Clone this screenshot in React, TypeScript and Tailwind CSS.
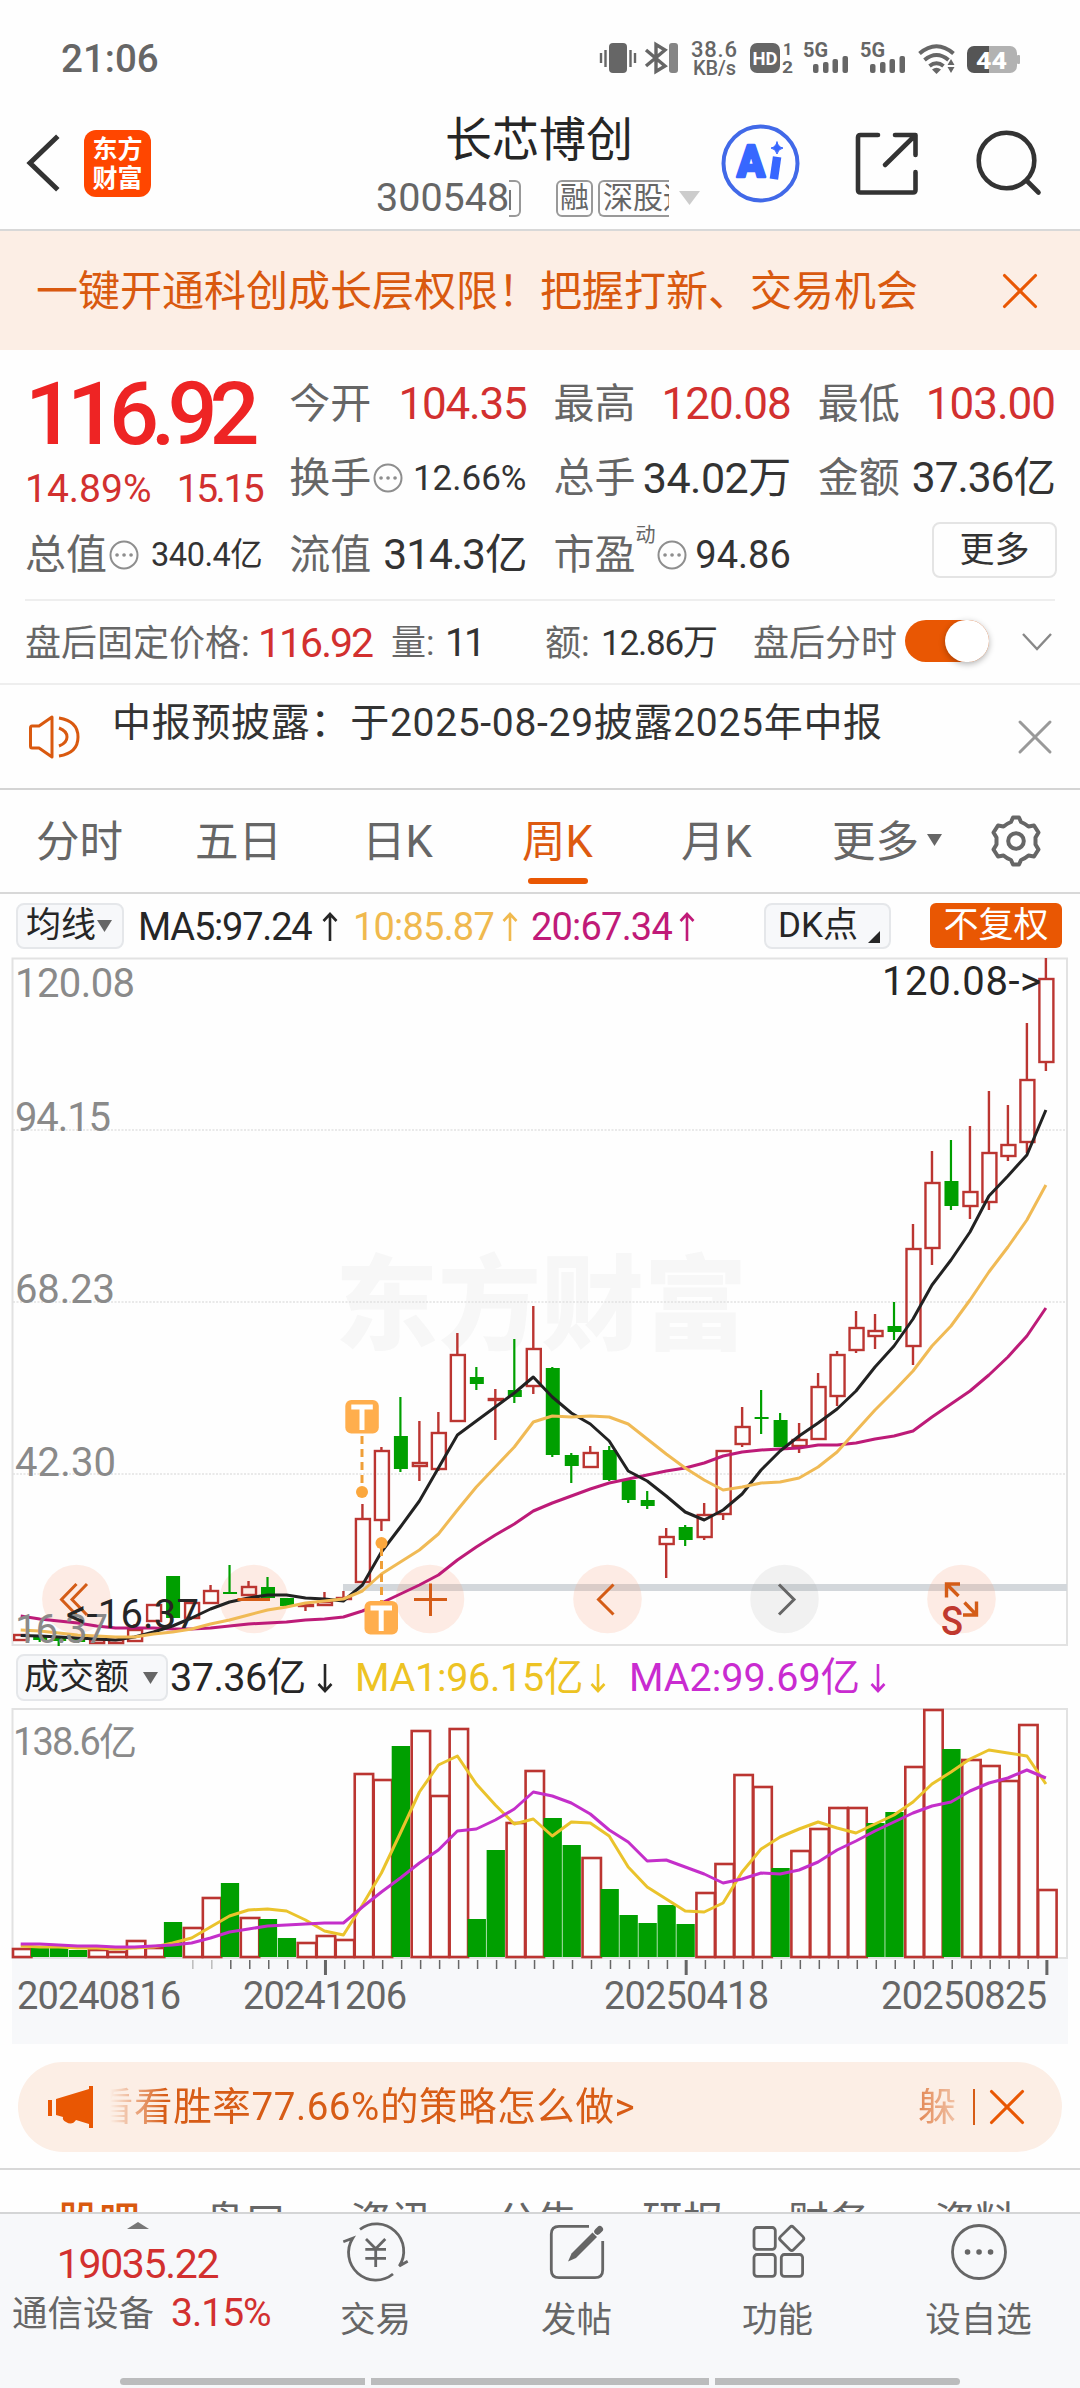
import { X } from "lucide-react";

// [rising, high, top, bottom, low]
const candles: [number, number, number, number, number][] = [
  [1, 1635, 1635, 1640, 1640], [0, 1637, 1637, 1640, 1642], [0, 1637, 1638, 1641, 1646], [0, 1637, 1638, 1642, 1643],
  [1, 1640, 1640, 1643, 1643], [1, 1640, 1640, 1643, 1643], [1, 1624, 1630, 1641, 1642], [1, 1604, 1605, 1621, 1621],
  [0, 1576, 1576, 1618, 1618], [1, 1599, 1603, 1618, 1618], [1, 1585, 1591, 1603, 1603], [0, 1565, 1592, 1593, 1594],
  [1, 1581, 1587, 1595, 1595], [0, 1577, 1587, 1598, 1598], [0, 1598, 1598, 1606, 1606], [1, 1604, 1605, 1606, 1611],
  [1, 1592, 1602, 1605, 1605], [1, 1591, 1598, 1599, 1600], [1, 1504, 1519, 1582, 1583], [1, 1447, 1451, 1520, 1531],
  [0, 1397, 1436, 1469, 1472], [1, 1421, 1463, 1466, 1481], [1, 1412, 1433, 1469, 1471], [1, 1333, 1355, 1421, 1422],
  [0, 1367, 1377, 1384, 1390], [1, 1389, 1399, 1400, 1440], [0, 1339, 1390, 1397, 1403], [1, 1306, 1349, 1386, 1394],
  [0, 1367, 1368, 1455, 1457], [0, 1453, 1455, 1466, 1483], [1, 1446, 1453, 1467, 1468], [0, 1446, 1450, 1480, 1481],
  [0, 1480, 1480, 1500, 1503], [0, 1491, 1500, 1506, 1509], [1, 1528, 1537, 1544, 1578], [0, 1525, 1527, 1540, 1546],
  [1, 1503, 1515, 1537, 1540], [1, 1450, 1451, 1514, 1520], [1, 1407, 1427, 1444, 1447], [0, 1390, 1417, 1418, 1434],
  [0, 1413, 1420, 1447, 1447], [1, 1423, 1440, 1446, 1453], [1, 1373, 1387, 1439, 1440], [1, 1351, 1355, 1396, 1406],
  [1, 1311, 1328, 1350, 1353], [1, 1314, 1331, 1336, 1349], [0, 1302, 1326, 1332, 1340], [1, 1224, 1249, 1346, 1365],
  [1, 1151, 1183, 1248, 1265], [0, 1140, 1181, 1206, 1210], [1, 1126, 1192, 1206, 1219], [1, 1091, 1153, 1202, 1210],
  [1, 1105, 1145, 1156, 1161], [1, 1023, 1080, 1142, 1153], [1, 958, 979, 1062, 1071],
];

const ma5 = [
  1635.5, 1636, 1637, 1638, 1639, 1640, 1637, 1632, 1626, 1618, 1609, 1602, 1598, 1595, 1595, 1598, 1599, 1601, 1585,
  1552, 1527, 1501, 1468, 1435, 1421, 1407, 1393, 1377, 1397, 1413, 1424, 1441, 1471, 1481, 1496, 1512, 1520, 1510,
  1494, 1470, 1451, 1436, 1423, 1409, 1391, 1367, 1346, 1319, 1285, 1260, 1232, 1196, 1176, 1155, 1110,
];
const ma10 = [
  1630, 1631, 1633, 1635, 1636, 1637, 1637, 1634, 1632, 1629, 1624, 1620, 1615, 1610, 1607, 1603, 1601, 1599, 1591,
  1574, 1562, 1550, 1534, 1510, 1487, 1467, 1447, 1422, 1416, 1417, 1416, 1417, 1424, 1439, 1454, 1468, 1480, 1490,
  1487, 1483, 1482, 1478, 1467, 1452, 1431, 1410, 1391, 1371, 1346, 1326, 1300, 1272, 1247, 1220, 1185,
];
const ma20 = [
  1616, 1619, 1621, 1623, 1626, 1628, 1628, 1628, 1629, 1629, 1628, 1626, 1624, 1623, 1622, 1620, 1619, 1617, 1611,
  1603, 1594, 1585, 1575, 1560, 1547, 1535, 1524, 1511, 1503, 1496, 1489, 1483, 1479, 1475, 1471, 1468, 1463, 1456,
  1452, 1450, 1449, 1448, 1445, 1445, 1443, 1439, 1436, 1431, 1417, 1404, 1391, 1375, 1357, 1336, 1308,
];

// [rising, top]
const volumes: [number, number][] = [
  [1, 1949], [0, 1947], [0, 1948], [0, 1950], [1, 1950], [1, 1952], [1, 1941], [1, 1948], [0, 1922], [1, 1928],
  [1, 1898], [0, 1883], [1, 1918], [0, 1919], [0, 1938], [1, 1943], [1, 1936], [1, 1940], [1, 1774], [1, 1780],
  [0, 1746], [1, 1731], [1, 1796], [1, 1729], [0, 1919], [0, 1850], [1, 1823], [1, 1771], [0, 1818], [0, 1845],
  [1, 1858], [0, 1889], [0, 1915], [0, 1923], [0, 1905], [0, 1924], [1, 1893], [1, 1864], [1, 1775], [1, 1787],
  [0, 1868], [1, 1851], [1, 1829], [1, 1808], [1, 1808], [0, 1823], [0, 1812], [1, 1767], [1, 1710], [0, 1749],
  [1, 1760], [1, 1766], [1, 1781], [1, 1725], [1, 1890],
];
const vma1 = [
  1946, 1947, 1947, 1948, 1948, 1949, 1948, 1947, 1943, 1938, 1927, 1916, 1910, 1909, 1911, 1920, 1931, 1935, 1905,
  1873, 1833, 1792, 1765, 1756, 1784, 1805, 1824, 1819, 1836, 1822, 1823, 1836, 1867, 1887, 1899, 1911, 1912, 1903,
  1872, 1849, 1837, 1829, 1822, 1828, 1833, 1824, 1815, 1802, 1784, 1772, 1759, 1750, 1753, 1756, 1784,
];
const vma2 = [
  1944, 1944, 1945, 1946, 1946, 1947, 1947, 1946, 1945, 1943, 1938, 1932, 1929, 1926, 1925, 1924, 1923, 1923, 1907,
  1892, 1878, 1863, 1850, 1831, 1829, 1820, 1809, 1792, 1796, 1803, 1814, 1830, 1842, 1861, 1860, 1867, 1874, 1883,
  1879, 1873, 1874, 1870, 1862, 1850, 1841, 1831, 1822, 1813, 1806, 1802, 1791, 1783, 1778, 1770, 1778,
];

const RED = "#bb3531";
const GREEN = "#009f00";

const xAt = (i: number) => 20.7 + i * 18.985;
const line = (ys: number[]) => ys.map((y, i) => `${xAt(i).toFixed(1)},${y}`).join(" ");

function Tri({ className, up }: { className: string; up?: boolean }) {
  return (
    <svg viewBox="0 0 10 10" preserveAspectRatio="none" className={className} fill="currentColor">
      <path d={up ? "M0 10L5 0L10 10Z" : "M0 0H10L5 10Z"} />
    </svg>
  );
}

function Arrow({ down }: { down?: boolean }) {
  return (
    <svg viewBox="0 0 16 30" className="h-[30px] w-4 shrink-0" fill="none" stroke="currentColor" strokeWidth="2.6">
      {down ? <path d="M8 1V28M1.5 21L8 28L14.5 21" /> : <path d="M8 29V2M1.5 9L8 2L14.5 9" />}
    </svg>
  );
}

function Dots() {
  return (
    <svg viewBox="0 0 30 30" className="ml-[2px] size-[30px] shrink-0 text-[#8e8e8e]" fill="none" stroke="currentColor" strokeWidth="2">
      <circle cx="15" cy="15" r="13.5" />
      <path d="M8 15h.1M15 15h.1M22 15h.1" strokeWidth="3.6" strokeLinecap="round" />
    </svg>
  );
}

function StatusBar() {
  return (
    <div className="flex h-[115px] items-center pl-[61px] text-[#666]">
      <span className="w-[536px] pt-[4px] text-[38.5px] font-medium">21:06</span>
      <svg viewBox="597 38 430 42" className="h-[42px] w-[430px]" fill="#666">
        <rect x="609" y="44" width="18" height="30" rx="4" />
        <path d="M601 54v10M605.5 51v17M630.5 51v17M635 54v10" stroke="#666" strokeWidth="2.4" />
        <path d="M646 51L665 67L656 72.5V45.5L665 51L646 67" fill="none" stroke="#666" strokeWidth="3.4" />
        <rect x="669" y="44" width="9" height="30" rx="3" fill="#858585" />
        <text x="691" y="57.5" fontSize="22" fontWeight="500" textLength="46">38.6</text>
        <text x="693" y="76" fontSize="20" fontWeight="500" textLength="43">KB/s</text>
        <rect x="750" y="44" width="30" height="30" rx="7" />
        <text x="752.5" y="66" fontSize="19" fontWeight="700" fill="#fff" textLength="25" lengthAdjust="spacingAndGlyphs">HD</text>
        <text x="783" y="56" fontSize="16" fontWeight="700">1</text>
        <text x="782" y="73.5" fontSize="16" fontWeight="700" textLength="11" lengthAdjust="spacingAndGlyphs">2</text>
        {[803, 860].map((x) => (
          <g key={x}>
            <text x={x} y="58" fontSize="19.5" fontWeight="700" textLength="25" lengthAdjust="spacingAndGlyphs">5G</text>
            <rect x={x + 10} y="65" width="5.5" height="9" rx="2" />
            <rect x={x + 20} y="63" width="5.5" height="11" rx="2" />
            <rect x={x + 29.5} y="60" width="5.5" height="14" rx="2" />
            <rect x={x + 39.5} y="57" width="5.5" height="17" rx="2" />
          </g>
        ))}
        <g fill="none" stroke="#666" strokeWidth="4">
          <path d="M919.5 54.5Q936.5 40 953.5 54.5" />
          <path d="M924.5 61Q936.5 51 948.5 61" />
          <path d="M929.5 67Q936.5 61.5 943.5 67" />
        </g>
        <path d="M932 70.5Q936.5 67 941 70.5L936.5 75Z" />
        <path d="M947.5 66L951 60L954.5 66ZM947.5 68L951 74L954.5 68Z" />
        <path d="M974 47h15v27h-15a7 7 0 0 1-7-7v-13a7 7 0 0 1 7-7Z" fill="#555" />
        <path d="M989 47h21a7 7 0 0 1 7 7v13a7 7 0 0 1-7 7h-21Z" fill="#b2b2b2" />
        <rect x="1017" y="56" width="3" height="9" rx="1" fill="#b2b2b2" />
        <text x="976" y="69.5" fontSize="24" fontWeight="800" fill="#fff" textLength="31" lengthAdjust="spacingAndGlyphs">44</text>
      </svg>
    </div>
  );
}

function Header() {
  return (
    <div className="flex h-[116px] border-b-2 border-[#d8d8d8]">
      <svg viewBox="0 0 84 96" className="h-24 w-[84px]" fill="none" stroke="#333" strokeWidth="5">
        <path d="M56 23L30 48L56 73" strokeLinecap="square" />
      </svg>
      <div className="mt-[15px] flex size-[67px] flex-col items-center justify-center rounded-xl bg-[#ff4600] text-[25px] leading-[29px] font-bold text-white">
        <span>东方</span>
        <span>财富</span>
      </div>
      <div className="ml-[225px] flex w-[326px] flex-col">
        <div className="ml-[69px] text-[47px] leading-[50px] whitespace-nowrap text-[#262626]">长芯博创</div>
        <div className="mt-[14px] flex h-[38px] items-center text-[#666]">
          <span className="w-[133px] text-[39.5px]">300548</span>
          <span className="h-[37px] w-3 rounded-r-md border-2 border-l-0 border-[#999]">
            <i className="mt-2 block h-5 w-[2px] bg-[#777]" />
          </span>
          <span className="ml-[35px] flex h-[37px] w-[37px] items-center justify-center rounded-md border-2 border-[#999] text-[29px] leading-none">
            融
          </span>
          <span className="ml-[5px] flex h-[37px] w-[71px] items-center overflow-hidden rounded-l-md border-2 border-r-0 border-[#999] pl-[3px] text-[30px] leading-none whitespace-nowrap">
            深股通
          </span>
          <Tri className="ml-[10px] h-[14px] w-[21px] shrink-0 text-[#ccc]" />
        </div>
      </div>
      <svg viewBox="702 115 378 96" className="h-24 w-[378px] shrink-0" fill="none" stroke="#333" strokeWidth="4.6" strokeLinecap="round" strokeLinejoin="round">
        <circle cx="760.5" cy="163.5" r="37" stroke="#4169e8" strokeWidth="4" />
        <text x="737" y="177" fontSize="44" fontWeight="900" fill="#3767ff" stroke="#3767ff" strokeWidth="2.5" textLength="28" lengthAdjust="spacingAndGlyphs">A</text>
        <path d="M776.5 161L774.500 175" stroke="#3767ff" strokeWidth="8.5" strokeLinecap="square" />
        <path d="M777 142Q778 147 783 148Q778 149 777 154Q776 149 771 148Q776 147 777 142Z" fill="#3767ff" stroke="#3767ff" strokeWidth="1" />
        <path d="M878 135H860.5Q858 135 858 137.5V190Q858 192.5 860.5 192.5H913Q915.5 192.5 915.5 190V172M895 135H915.5V155M914 136.5L885 165" />
        <circle cx="1006.5" cy="160.5" r="27.8" />
        <path d="M1027 181L1038.5 192.5" />
      </svg>
    </div>
  );
}

function Cell({ label, value, dots, sup, className }: { label: string; value: string; dots?: boolean; sup?: string; className: string }) {
  return (
    <div className="flex h-[74px] items-center whitespace-nowrap">
      <span className="text-[41px] text-[#666]">{label}</span>
      {sup && <span className="-mt-10 w-[19px] text-xl text-[#666]">{sup}</span>}
      {dots && <Dots />}
      <span className={"ml-auto " + className}>{value}</span>
    </div>
  );
}

function Quote() {
  return (
    <div className="mx-[25px] h-[251px] border-b-2 border-[#eee]">
      <div className="grid grid-cols-4 gap-x-[27px] pt-[17px]">
        <div className="row-span-2 h-[148px] whitespace-nowrap">
          <div className="mt-[9px] text-[88px] leading-[76px] font-medium tracking-[-8px] text-[#ee2424]">116.92</div>
          <div className="mt-[17px] flex justify-between text-[39px] leading-[40px] text-[#d2302f]">
            <span>14.89%</span>
            <span className="tracking-[-2.5px]">15.15</span>
          </div>
        </div>
        <Cell label="今开" value="104.35" className="text-[44px] tracking-[-1.2px] text-[#d2302f]" />
        <Cell label="最高" value="120.08" className="text-[44px] tracking-[-1px] text-[#d2302f]" />
        <Cell label="最低" value="103.00" className="text-[44px] tracking-[-1px] text-[#d2302f]" />
        <Cell label="换手" dots value="12.66%" className="text-[35px] text-[#333]" />
        <Cell label="总手" value="34.02万" className="text-[43px] tracking-[-0.5px] text-[#333]" />
        <Cell label="金额" value="37.36亿" className="text-[42.5px] tracking-[-1px] text-[#333]" />
        <div className="mt-[3px]">
          <Cell label="总值" dots value="340.4亿" className="text-[32.5px] tracking-[-0.5px] text-[#333]" />
        </div>
        <div className="mt-[3px]">
          <Cell label="流值" value="314.3亿" className="text-[42.5px] tracking-[-1px] text-[#333]" />
        </div>
        <div className="mt-[3px]">
          <Cell label="市盈" sup="动" dots value="94.86" className="text-[38px] text-[#333]" />
        </div>
        <div className="mt-[7px] -mr-[2px] flex h-14 w-[125px] items-center justify-center justify-self-end rounded-lg border-2 border-[#e4e4e4] text-[35px] text-[#333]">
          更多
        </div>
      </div>
    </div>
  );
}

function AfterHours() {
  return (
    <div className="flex h-[84px] items-center border-b-2 border-[#eee] pt-[3px] pl-[25px] text-[36px] whitespace-nowrap text-[#666]">
      <span className="w-[233px]">盘后固定价格:</span>
      <span className="w-[133px] text-[41px] tracking-[-2px] text-[#d2302f]">116.92</span>
      <span className="w-[54px] text-[35px]">量:</span>
      <span className="w-[100px] text-[39px] tracking-[-3px] text-[#333]">11</span>
      <span className="w-[56px]">额:</span>
      <span className="w-[152px] text-[35px] tracking-[-1.2px] text-[#333]">12.86万</span>
      <span className="w-[152px]">盘后分时</span>
      <span className="-mt-[6px] flex h-[42px] w-[84px] justify-end rounded-full bg-[#e95703]">
        <i className="h-[42px] w-[44px] rounded-full bg-white shadow-[0_2px_6px_rgba(0,0,0,0.3)]" />
      </span>
      <svg viewBox="0 0 30 20" className="-mt-[3px] ml-[33px] h-5 w-[30px]" fill="none" stroke="#888" strokeWidth="2.4">
        <path d="M1 2L15 17L29 2" />
      </svg>
    </div>
  );
}

function Notice() {
  return (
    <div className="flex h-[105px] border-b-2 border-[#d4d4d4]">
      <svg viewBox="0 0 54 48" className="mt-[28px] ml-[28px] h-12 w-[54px]" fill="none" stroke="#d9590f" strokeWidth="3">
        <path d="M4 13H11L24 4V44L11 35H4Q2.5 35 2.5 33V15Q2.5 13 4 13Z" strokeLinejoin="round" />
        <path d="M31 15Q39 18 39 24Q39 30 31 33M31 5Q50 8 50 24Q50 40 31 43" />
      </svg>
      <span className="mt-[17px] ml-[30px] text-[39px] leading-[42px] tracking-[0.7px] whitespace-nowrap text-[#333]">
        中报预披露：于2025-08-29披露2025年中报
      </span>
      <X className="mt-[22px] mr-[15px] ml-auto size-[60px]" color="#999" strokeWidth={1.2} />
    </div>
  );
}

function Periods() {
  return (
    <div className="flex h-[104px] items-center border-b-2 border-[#d8d8d8] pt-[4px] pl-[36px] text-[43.5px] whitespace-nowrap text-[#666]">
      <span className="w-[159px]">分时</span>
      <span className="w-[167px]">五日</span>
      <span className="w-[160px]">日K</span>
      <span className="relative w-[159px] text-[#dd5a10]">
        周K
        <i className="absolute top-[57px] left-[6px] h-[6px] w-[60px] rounded-full bg-[#e95703]" />
      </span>
      <span className="w-[151px]">月K</span>
      <span>更多</span>
      <Tri className="-mt-[6px] ml-[8px] h-3 w-[15px] text-[#666]" />
      <svg viewBox="0 0 54 54" className="-mt-[4px] ml-[47px] size-[54px]" fill="none" stroke="#666" strokeWidth="4">
        <path d="M22 8L24 3.5H30L32 8Q36 9.5 39.5 12.5L45 11.5L49.5 18.5L46.5 23.5V30.5L49.5 35.5L45 42.5L39.5 41.5Q36 44.5 32 46L30 50.5H24L22 46Q18 44.5 14.5 41.5L9 42.5L4.5 35.5L7.5 30.5V23.5L4.5 18.5L9 11.5L14.5 12.5Q18 9.5 22 8Z" strokeLinejoin="round" />
        <circle cx="27" cy="27" r="7.8" />
      </svg>
    </div>
  );
}

function MaRow() {
  return (
    <div className="flex h-[63px] items-center pt-[2px] pl-4 text-[38px] whitespace-nowrap">
      <div className="mt-[-2px] flex h-[46px] w-[108px] shrink-0 items-center rounded-lg border-2 border-[#e5e7ea] bg-[#f7f8fa] pl-2 text-[35px] text-[#262626]">
        均线
        <Tri className="ml-px h-3 w-[15px] shrink-0 text-[#666]" />
      </div>
      <span className="ml-[14px] w-[184px] tracking-[-1.2px] text-[#262626]">MA5:97.24</span>
      <span className="w-[31px] text-[#262626]"><Arrow /></span>
      <span className="w-[149px] tracking-[-0.8px] text-[#f0b94e]">10:85.87</span>
      <span className="w-[29px] text-[#f0b94e]"><Arrow /></span>
      <span className="w-[148px] tracking-[-0.8px] text-[#c01a78]">20:67.34</span>
      <span className="text-[#c01a78]"><Arrow /></span>
      <div className="mt-[-2px] ml-[69px] flex h-[46px] w-[127px] shrink-0 items-center rounded-lg border-2 border-[#e5e7ea] bg-[#f7f8fa] pl-3 text-[35px] text-[#262626]">
        DK点
        <svg viewBox="0 0 12 12" className="mt-[22px] ml-2.5 size-3 shrink-0">
          <path d="M12 0V12H0Z" fill="#262626" />
        </svg>
      </div>
      <div className="mt-[-2px] ml-[39px] flex h-[45px] w-[132px] shrink-0 items-center justify-center rounded-md bg-[#e95703] text-[35px] text-white">
        不复权
      </div>
    </div>
  );
}

function Badge({ x, y }: { x: number; y: number }) {
  return (
    <g>
      <rect x={x} y={y} width="33.5" height="33.5" rx="6" fill="#ffae4d" />
      <path d={`M${x + 6} ${y + 7}h21.5M${x + 16.7} ${y + 7}v23`} stroke="#fff" strokeWidth="5" />
    </g>
  );
}

function KChart() {
  return (
    <svg viewBox="0 957 1080 690" className="block h-[690px] w-[1080px]">
      <text x="335" y="1342" fontSize="103" fontWeight="900" fill="#f7f7f7" textLength="412">东方财富</text>
      <path d="M13 1130H1066M13 1302H1066M13 1474H1066" stroke="#e2e2e2" strokeWidth="1.5" strokeDasharray="2 1.5" />
      <rect x="12.5" y="958.5" width="1054.5" height="686.5" fill="none" stroke="#e2e2e2" strokeWidth="2" />
      <rect x="343" y="1584" width="724" height="7" fill="#d3d7db" />
      {[76.4, 253.8, 430, 607.5, 961.5].map((x) => (
        <circle key={x} cx={x} cy="1599" r="34.3" fill="#f9a27c" fillOpacity="0.2" />
      ))}
      <circle cx="784.5" cy="1599" r="34.3" fill="#999" fillOpacity="0.13" />
      {candles.map(([up, high, top, bottom, low], i) => {
        const x = xAt(i);
        return up ? (
          <g key={i} stroke={RED} strokeWidth="2.4" fill="none">
            <path d={`M${x} ${high}V${top}M${x} ${bottom}V${low}`} />
            <rect x={x - 6.5} y={top} width="14" height={bottom - top} />
          </g>
        ) : (
          <g key={i} fill={GREEN}>
            <rect x={x - 1.1} y={high} width="2.2" height={low - high} />
            <rect x={x - 6.5} y={top} width="14" height={Math.max(bottom - top, 2)} />
          </g>
        );
      })}
      <g fill="none" strokeWidth="3" strokeLinejoin="round">
        <polyline points={line(ma20)} stroke="#bd1b78" />
        <polyline points={line(ma5)} stroke="#222" />
        <polyline points={line(ma10)} stroke="#f0ba55" />
      </g>
      <path d="M362 1436V1488M381.5 1548V1601" stroke="#ef9f38" strokeWidth="3" strokeDasharray="8 5" />
      <circle cx="362" cy="1492" r="6" fill="#fba73d" />
      <circle cx="381.5" cy="1543" r="6" fill="#fba73d" />
      <Badge x={345.3} y={1400} />
      <Badge x={364.5} y={1601} />
      <g fill="none" stroke="#d45c17" strokeWidth="3">
        <path d="M76.5 1584L61.5 1599.5L76.5 1615M87 1584L72 1599.5L87 1615" />
        <path d="M237.5 1599.5H270M414 1599.5H447M430.5 1583.5V1616" />
        <path d="M613.5 1584.5L598.5 1599.5L613.5 1614.5" />
        <path d="M779 1584.5L794 1599.5L779 1614.5" stroke="#666" />
        <path d="M960 1584H946.5V1597.5M947 1584.5L958.5 1596M964.5 1602.5L976 1614.5M963 1615H976.5V1601.5" strokeWidth="3.4" />
      </g>
      <text x="941" y="1635" fontSize="41" fontWeight="500" fill="#c0392f" textLength="22" lengthAdjust="spacingAndGlyphs">S</text>
      <g fontSize="40" fill="#8a8a8a">
        <text x="15" y="997" textLength="120">120.08</text>
        <text x="15" y="1131" textLength="96">94.15</text>
        <text x="15" y="1303" textLength="100">68.23</text>
        <text x="15" y="1476" textLength="101">42.30</text>
        <text x="15" y="1643" textLength="93">16.37</text>
      </g>
      <g fontSize="40" fill="#262626">
        <text x="882" y="995" textLength="159">120.08-&gt;</text>
        <text x="66" y="1628" textLength="133">&lt;-16.37</text>
      </g>
    </svg>
  );
}

function VolumeRow() {
  return (
    <div className="flex h-[61px] items-center pl-4 text-[39.5px] whitespace-nowrap">
      <div className="flex h-[47px] w-[152px] shrink-0 items-center rounded-lg border-2 border-[#e5e7ea] bg-[#f7f8fa] pl-1.5 text-[35px] text-[#262626]">
        成交额
        <Tri className="ml-[14px] h-3 w-[15px] shrink-0 text-[#666]" />
      </div>
      <span className="ml-[2px] w-[147px] pt-px tracking-[-0.5px] text-[#262626]">37.36亿</span>
      <span className="w-[38px] text-[#262626]"><Arrow down /></span>
      <span className="w-[235px] pt-px tracking-[-0.3px] text-[#edc323]">MA1:96.15亿</span>
      <span className="w-[39px] text-[#edc323]"><Arrow down /></span>
      <span className="w-[241px] pt-px text-[#c92bd0]">MA2:99.69亿</span>
      <span className="text-[#c92bd0]"><Arrow down /></span>
    </div>
  );
}

function VolumeChart() {
  return (
    <svg viewBox="0 1708 1080 336" className="block h-[336px] w-[1080px]">
      <rect x="12" y="1958" width="1056" height="86" fill="#f7f8fa" />
      <rect x="12.5" y="1709" width="1054.5" height="249" fill="none" stroke="#e2e2e2" strokeWidth="2" />
      {volumes.map(([up, top], i) => {
        const x = 12 + i * 18.985;
        return up ? (
          <rect key={i} x={x + 1} y={top} width="18.4" height={1957 - top} fill="none" stroke={RED} strokeWidth="2.6" />
        ) : (
          <rect key={i} x={x} y={top} width="18.3" height={1957 - top} fill={GREEN} />
        );
      })}
      <g fill="none" strokeWidth="3" strokeLinejoin="round">
        <polyline points={line(vma1)} stroke="#eac32c" />
        <polyline points={line(vma2)} stroke="#c42fca" />
      </g>
      {volumes.map((_, i) => {
        if (i < 9) return null;
        const major = i === 16 || i === 35 || i === 54;
        return (
          <rect key={i} x={xAt(i) + (major ? -0.5 : 0.5)} y="1960" width={major ? 3 : 1.5} height={major ? 15 : 9} fill={i < 11 ? "#bbb" : "#666"} />
        );
      })}
      <text x="13" y="1754.5" fontSize="38" fill="#8a8a8a" textLength="124">138.6亿</text>
      <g fontSize="38" fill="#666">
        <text x="17" y="2009" textLength="164">20240816</text>
        <text x="243" y="2009" textLength="164">20241206</text>
        <text x="604" y="2009" textLength="165">20250418</text>
        <text x="881" y="2009" textLength="166">20250825</text>
      </g>
    </svg>
  );
}

function Promo() {
  return (
    <div className="mx-[18px] mt-[18px] flex h-[90px] items-center rounded-full bg-[#fceee5] text-[38.5px] whitespace-nowrap text-[#d75c16]">
      <svg viewBox="0 0 46 42" className="ml-[30px] h-[42px] w-[46px] shrink-0" fill="#e95703">
        <path d="M0 14H4V30H0ZM8 13L41 3V0H45V42H41V38L28 34Q24 40 18 36Q14 34 15 31L8 29Z" />
      </svg>
      <div className="ml-[16px] flex w-[808px] shrink-0 overflow-hidden">
        <span className="-ml-[15px] pt-px tracking-[0.6px] [mask-image:linear-gradient(to_right,transparent_15px,black_70px)]">
          看看胜率77.66%的策略怎么做&gt;
        </span>
      </div>
      <span className="w-[38px] shrink-0 overflow-hidden [mask-image:linear-gradient(to_right,rgba(0,0,0,0.7),rgba(0,0,0,0.3))]">躲</span>
      <i className="ml-[17px] h-9 w-[1.5px] shrink-0 bg-[#d75c16]" />
      <X className="ml-px size-[62px] shrink-0" color="#e95703" strokeWidth={1.2} />
    </div>
  );
}

function Sections() {
  return (
    <div className="mt-[16px] flex h-[44px] overflow-hidden border-t-2 border-[#d8d8d8] px-[26px] pt-[30px] text-[41px] leading-[44px] text-[#666]">
      {["股吧", "盘口", "资讯", "公告", "研报", "财务", "资料"].map((name, i) => (
        <span key={name} className={"w-[146px] shrink-0 text-center " + (i === 0 ? "font-medium text-[#d9590f]" : "")}>
          {name}
        </span>
      ))}
    </div>
  );
}

function BottomBar() {
  return (
    <div className="h-[176px] border-t-2 border-[#d4d5d6] bg-[#f7f8fa] text-[#666]">
      <div className="flex h-[164px]">
        <div className="w-[275px] whitespace-nowrap">
          <Tri up className="mt-[8px] ml-[127px] h-[7px] w-[22px] text-[#777]" />
          <div className="mt-[15px] text-center text-[41px] leading-[40px] tracking-[-1.3px] text-[#d2302f]">19035.22</div>
          <div className="mt-[10px] ml-3 text-[35.5px] leading-[38px]">
            通信设备
            <span className="ml-[17px] text-[39px] tracking-[-1px] text-[#d2302f]">3.15%</span>
          </div>
        </div>
        {["交易", "发帖", "功能", "设自选"].map((name, i) => (
          <div key={name} className="flex w-[201px] flex-col items-center pt-[2px] text-[35.5px] leading-[40px]">
            <svg viewBox="0 0 72 72" className="size-[72px]" fill="none" stroke="currentColor" strokeWidth="2.8">
              {i === 0 && (
                <path d="M20 13.3A27.3 27.3 0 0 1 59.3 50L67.7 45.3M53 58A27.3 27.3 0 0 1 12.7 22.3L3.3 25.7M26 23L35.7 32.7L45.3 23M25.3 33.3H46M25.3 42.3H46M35.7 32.7V51" />
              )}
              {i === 1 && (
                <>
                  <path d="M48 10.3H18Q10.3 10.3 10.3 18V54Q10.3 61.7 18 61.7H54Q61.7 61.7 61.7 54V25" />
                  <path d="M51.5 16.5L56 21L35 42L27 45.5L30.5 37.5Z" fill="currentColor" stroke="none" />
                  <path d="M56.5 15.5L58.8 13.2" strokeWidth="6.5" strokeLinecap="round" />
                </>
              )}
              {i === 2 && (
                <>
                  <rect x="12" y="11.5" width="21.3" height="21.8" rx="3" />
                  <rect x="12" y="38.5" width="21.3" height="21.8" rx="3" />
                  <rect x="39.3" y="38.5" width="21.3" height="21.8" rx="3" />
                  <rect x="40.5" y="13.2" width="18.4" height="18.4" rx="2.5" transform="rotate(45 49.7 22.4)" />
                </>
              )}
              {i === 3 && (
                <>
                  <circle cx="36" cy="36" r="26.5" />
                  <path d="M24.5 36h.1M36 36h.1M47.5 36h.1" strokeWidth="5.5" strokeLinecap="round" />
                </>
              )}
            </svg>
            <span className="mt-[12px]">{name}</span>
          </div>
        ))}
      </div>
      <div className="flex justify-center gap-[6px]">
        <i className="h-[7px] w-[245px] rounded-l-full bg-[#bbbcbd]" />
        <i className="h-[7px] w-[338px] bg-[#bbbcbd]" />
        <i className="h-[7px] w-[245px] rounded-r-full bg-[#bbbcbd]" />
      </div>
    </div>
  );
}

export default function App() {
  return (
    <div className="h-[2388px] w-[1080px] overflow-hidden bg-[#fefefe] font-['Roboto','Noto_Sans_CJK_SC',sans-serif] leading-none">
      <StatusBar />
      <Header />
      <div className="flex h-[119px] items-center bg-[#fceee5] pt-[3px] pl-[36px] text-[42px] whitespace-nowrap text-[#d9590f]">
        一键开通科创成长层权限！把握打新、交易机会
        <X className="-mt-[3px] mr-[29px] ml-auto size-[62px]" color="#e95703" strokeWidth={1.2} />
      </div>
      <Quote />
      <AfterHours />
      <Notice />
      <Periods />
      <MaRow />
      <KChart />
      <VolumeRow />
      <VolumeChart />
      <Promo />
      <Sections />
      <BottomBar />
    </div>
  );
}
